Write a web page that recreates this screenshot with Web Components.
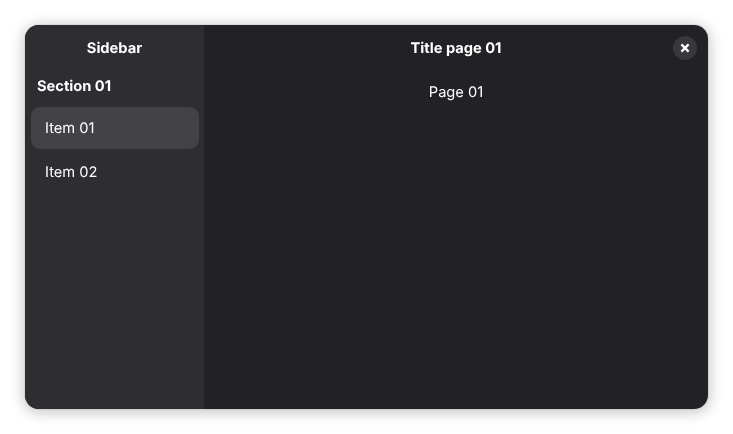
<!DOCTYPE html>
<html>
<head>
<meta charset="utf-8">
<title>Sidebar</title>
<style>
  html, body { margin: 0; height: 100%; background: #fff; overflow: hidden; }
  body { padding: 25px; box-sizing: border-box; font-family: Inter, "Noto Sans", sans-serif; font-size: 14.67px; text-rendering: geometricPrecision; }
</style>
</head>
<body>
<app-window>
  <nav-sidebar slot="sidebar" title="Sidebar">
    <nav-section label="Section 01">
      <nav-item selected>Item 01</nav-item>
      <nav-item>Item 02</nav-item>
    </nav-section>
  </nav-sidebar>
  <page-content title="Title page 01">Page 01</page-content>
</app-window>
<script>
class AppWindow extends HTMLElement {
  constructor() {
    super();
    this.attachShadow({ mode: 'open' });
    this.shadowRoot.innerHTML = `
      <style>
        :host {
          display: flex;
          width: 683px;
          height: 384px;
          border-radius: 14px;
          overflow: hidden;
          background: #222226;
          color: #fff;
          will-change: transform;
          box-shadow: 0 0 0 1px rgba(0, 0, 0, 0.05), 0 2px 14px 2px rgba(0, 0, 0, 0.22);
        }
      </style>
      <slot name="sidebar"></slot>
      <slot></slot>
    `;
  }
}

class NavSidebar extends HTMLElement {
  constructor() {
    super();
    this.attachShadow({ mode: 'open' });
    this.shadowRoot.innerHTML = `
      <style>
        :host {
          display: block;
          flex: none;
          width: 179px;
          background: #2e2e32;
          box-sizing: border-box;
        }
        header {
          height: 45px;
          display: flex;
          align-items: center;
          justify-content: center;
          font-weight: 700;
        }
      </style>
      <header>${this.getAttribute('title')}</header>
      <slot></slot>
    `;
  }
}

class NavSection extends HTMLElement {
  constructor() {
    super();
    this.attachShadow({ mode: 'open' });
    this.shadowRoot.innerHTML = `
      <style>
        :host { display: block; padding: 0 5px 0 6px; }
        h2 {
          margin: 0;
          padding: 0 6px 6px;
          height: 37px;
          box-sizing: border-box;
          display: flex;
          align-items: center;
          font-size: inherit;
          font-weight: 700;
        }
        .list { display: flex; flex-direction: column; gap: 2px; }
      </style>
      <h2>${this.getAttribute('label')}</h2>
      <div class="list"><slot></slot></div>
    `;
  }
}

class NavItem extends HTMLElement {
  constructor() {
    super();
    this.attachShadow({ mode: 'open' });
    this.shadowRoot.innerHTML = `
      <style>
        :host {
          display: flex;
          align-items: center;
          height: 42px;
          padding: 0 14px;
          box-sizing: border-box;
          border-radius: 9px;
          color: #fff;
        }
        :host([selected]) { background: #434347; }
      </style>
      <slot></slot>
    `;
  }
}

class PageContent extends HTMLElement {
  constructor() {
    super();
    this.attachShadow({ mode: 'open' });
    this.shadowRoot.innerHTML = `
      <style>
        :host { display: block; flex: 1; min-width: 0; }
        header {
          position: relative;
          height: 45px;
          display: flex;
          align-items: center;
          justify-content: center;
          font-weight: 700;
        }
        button {
          position: absolute;
          top: 11px;
          right: 11px;
          width: 24px;
          height: 24px;
          padding: 0;
          border: 0;
          border-radius: 50%;
          background: #38383c;
          display: flex;
          align-items: center;
          justify-content: center;
        }
        main {
          padding-top: 14px;
          text-align: center;
          line-height: 17px;
          color: #fff;
        }
      </style>
      <header>
        ${this.getAttribute('title')}
        <button aria-label="Close">
          <svg width="16" height="16" viewBox="0 0 16 16">
            <path d="M4.4 4.4 11.6 11.6M11.6 4.4 4.4 11.6" stroke="#fff" stroke-width="2.2" fill="none"/>
          </svg>
        </button>
      </header>
      <main><slot></slot></main>
    `;
  }
}

customElements.define('app-window', AppWindow);
customElements.define('nav-sidebar', NavSidebar);
customElements.define('nav-section', NavSection);
customElements.define('nav-item', NavItem);
customElements.define('page-content', PageContent);
</script>
</body>
</html>
